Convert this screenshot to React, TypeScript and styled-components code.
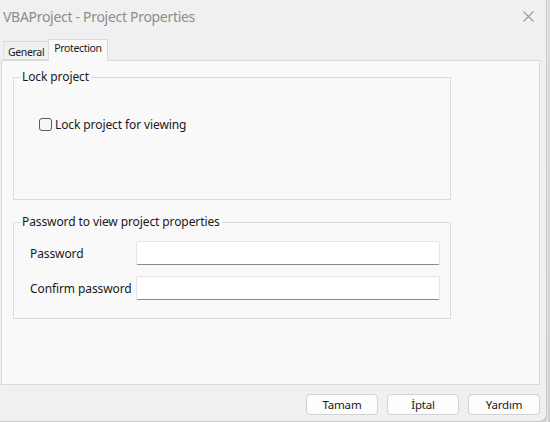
import React from "react";
import styled, { createGlobalStyle } from "styled-components";

const Global = createGlobalStyle`
  html, body { margin: 0; padding: 0; }
  body {
    width: 550px; height: 422px; overflow: hidden;
    background: #d6d6d6;
    font-family: "Noto Sans", "Open Sans", sans-serif;
  }
`;

const Screen = styled.div`
  display: flex;
  width: 550px;
  height: 422px;
`;

const Dialog = styled.div`
  width: 546px;
  height: 421px;
  background: #f0f0f0;
  border-right: 1px solid #c4c4c4;
  border-bottom: 1px solid #c4c4c4;
  border-bottom-right-radius: 8px;
  display: flex;
  flex-direction: column;
  box-sizing: content-box;
`;

const Strip = styled.div`
  flex: 1;
  background: linear-gradient(#dcdcdc, #cfcfcf);
  border-left: 1px solid #e8e8e8;
`;

const TitleBar = styled.div`
  height: 33px;
  flex-shrink: 0;
  display: flex;
  align-items: center;
  justify-content: space-between;
  padding: 0 12px 1px 3px;
  box-sizing: border-box;
`;

const Title = styled.div`
  font-size: 14px;
  color: #8d8d8d;
  letter-spacing: -0.3px;
`;

const Close = styled.svg`
  width: 11px;
  height: 11px;
`;

const TabRow = styled.div`
  height: 27px;
  flex-shrink: 0;
  display: flex;
  align-items: flex-end;
  padding-left: 3px;
  position: relative;
  z-index: 1;
`;

const Tab = styled.div<{ $active?: boolean }>`
  box-sizing: border-box;
  height: ${(p) => (p.$active ? "22px" : "19px")};
  padding: ${(p) => (p.$active ? "1px 5px 0 5px" : "3px 4px 0 4px")};
  margin-bottom: ${(p) => (p.$active ? "-1px" : "0")};
  font-size: 10.5px;
  color: #1a1a1a;
  background: ${(p) => (p.$active ? "#f9f9f9" : "#f0f0f0")};
  border: 1px solid #dadada;
  border-bottom: ${(p) => (p.$active ? "none" : "1px solid #dadada")};
  border-left: ${(p) => (p.$active ? "1px solid #dadada" : "1px solid #e2e2e2")};
  border-right: ${(p) => (p.$active ? "1px solid #dadada" : "none")};
  letter-spacing: -0.35px;
  white-space: nowrap;
`;

const Panel = styled.div`
  margin-left: 1px;
  width: 539px;
  height: 325px;
  flex-shrink: 0;
  box-sizing: border-box;
  background: #f9f9f9;
  border: 1px solid #dadada;
  padding: 8px 0 0 11px;
  display: flex;
  flex-direction: column;
  gap: 14px;
`;

const Group = styled.fieldset<{ $h: number }>`
  margin: 0;
  width: 438px;
  height: ${(p) => p.$h}px;
  box-sizing: border-box;
  border: 1px solid #dcdcdc;
  padding: 0;
  min-width: 0;
`;

const Legend = styled.legend`
  font-size: 12px;
  line-height: 16px;
  padding: 0 2px 0 1px;
  margin-left: 7px;
  color: #1a1a1a;
  letter-spacing: -0.1px;
`;

const CheckRow = styled.label`
  display: flex;
  align-items: center;
  gap: 3px;
  margin: 31px 0 0 25px;
  font-size: 12px;
  color: #1a1a1a;
  letter-spacing: -0.1px;
`;

const Box = styled.span`
  width: 13px;
  height: 13px;
  box-sizing: border-box;
  border: 1px solid #5a5a5a;
  border-radius: 3px;
  background: #f7f7f7;
`;

const Form = styled.div`
  display: grid;
  grid-template-columns: 106px 304px;
  row-gap: 11px;
  align-items: center;
  margin: 11px 0 0 16px;
`;

const FieldLabel = styled.span`
  font-size: 12px;
  color: #1a1a1a;
  letter-spacing: -0.1px;
`;

const Input = styled.div`
  height: 24px;
  box-sizing: border-box;
  background: #ffffff;
  border: 1px solid #e6e6e6;
  border-bottom: 1px solid #8a8a8a;
  border-radius: 2px;
`;

const Footer = styled.div`
  display: flex;
  justify-content: flex-end;
  gap: 9px;
  padding: 9px 6px 0 0;
`;

const Button = styled.div`
  width: 72px;
  height: 21px;
  box-sizing: border-box;
  display: flex;
  align-items: center;
  justify-content: center;
  background: #fdfdfd;
  border: 1px solid #d2d2d2;
  border-radius: 4px;
  font-size: 11.5px;
  color: #1a1a1a;
  letter-spacing: -0.2px;
`;

export default function App() {
  return (
    <>
      <Global />
      <Screen>
        <Dialog>
          <TitleBar>
            <Title>VBAProject - Project Properties</Title>
            <Close viewBox="0 0 11 11">
              <path d="M0.5 0.5 L10.5 10.5 M10.5 0.5 L0.5 10.5" stroke="#9a9a9a" strokeWidth="1.1" fill="none" />
            </Close>
          </TitleBar>
          <TabRow>
            <Tab>General</Tab>
            <Tab $active>Protection</Tab>
          </TabRow>
          <Panel>
            <Group $h={131}>
              <Legend>Lock project</Legend>
              <CheckRow>
                <Box />
                Lock project for viewing
              </CheckRow>
            </Group>
            <Group $h={105}>
              <Legend>Password to view project properties</Legend>
              <Form>
                <FieldLabel>Password</FieldLabel>
                <Input />
                <FieldLabel>Confirm password</FieldLabel>
                <Input />
              </Form>
            </Group>
          </Panel>
          <Footer>
            <Button>Tamam</Button>
            <Button>İptal</Button>
            <Button>Yardım</Button>
          </Footer>
        </Dialog>
        <Strip />
      </Screen>
    </>
  );
}
